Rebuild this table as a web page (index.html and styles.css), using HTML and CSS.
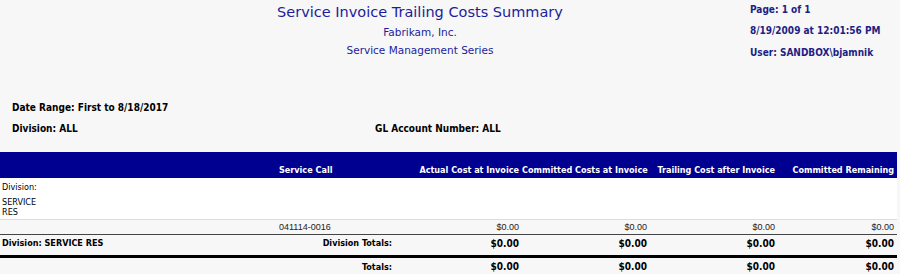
FILE: index.html
```html
<!DOCTYPE html>
<html lang="en">
  <head>
    <meta charset="UTF-8" />
    <title>Service Invoice Trailing Costs Summary</title>
    <link rel="stylesheet" href="styles.css">
  </head>
  <body>
    <div class="report-head">
      <div class="titles">
        <h1>Service Invoice Trailing Costs Summary</h1>
        <div class="sub">Fabrikam, Inc.</div>
        <div class="sub">Service Management Series</div>
      </div>
      <div class="info">
        <div>Page: 1 of 1</div>
        <div>8/19/2009 at 12:01:56 PM</div>
        <div>User: SANDBOX\bjamnik</div>
      </div>
    </div>

    <div class="filters">
      <div class="filter-row">Date Range: First to 8/18/2017</div>
      <div class="filter-row split">
        <span class="f-left">Division: ALL</span>
        <span>GL Account Number: ALL</span>
      </div>
    </div>

    <table class="report">
      <colgroup>
        <col style="width:275px">
        <col style="width:120px">
        <col style="width:127px">
        <col style="width:128px">
        <col style="width:128px">
        <col style="width:119px">
      </colgroup>
      <thead>
        <tr>
          <th></th>
          <th class="l">Service Call</th>
          <th>Actual Cost at Invoice</th>
          <th>Committed Costs at Invoice</th>
          <th>Trailing Cost after Invoice</th>
          <th>Committed Remaining</th>
        </tr>
      </thead>
      <tbody>
        <tr class="group">
          <td colspan="6">
            <div class="g-label">Division:</div>
            <div class="g-name">SERVICE<br>RES</div>
          </td>
        </tr>
        <tr class="detail">
          <td></td>
          <td class="l">041114-0016</td>
          <td>$0.00</td>
          <td>$0.00</td>
          <td>$0.00</td>
          <td>$0.00</td>
        </tr>
        <tr class="subtotal">
          <td class="l">Division: SERVICE RES</td>
          <td>Division Totals:</td>
          <td class="amt">$0.00</td>
          <td class="amt">$0.00</td>
          <td class="amt">$0.00</td>
          <td class="amt">$0.00</td>
        </tr>
        <tr class="total">
          <td></td>
          <td>Totals:</td>
          <td class="amt">$0.00</td>
          <td class="amt">$0.00</td>
          <td class="amt">$0.00</td>
          <td class="amt">$0.00</td>
        </tr>
      </tbody>
    </table>
  </body>
</html>
```

FILE: styles.css
```css
body {
  margin: 0;
  background: #f7f7f7;
  font-family: "DejaVu Sans Condensed", "DejaVu Sans", Verdana, sans-serif;
  font-stretch: condensed;
  color: #000;
}
.report-head {
  display: flex;
  height: 97px;
}
.titles {
  width: 750px;
  padding-left: 90px;
  box-sizing: border-box;
  text-align: center;
  color: #1c1c9c;
  font-family: "DejaVu Sans", Verdana, sans-serif;
  font-stretch: normal;
}
.titles h1 {
  margin: 3px 0 0;
  font-size: 14.5px;
  font-weight: normal;
  line-height: 19px;
}
.sub {
  font-size: 10.5px;
  line-height: 18px;
}
.sub:first-of-type {
  margin-top: 1px;
}
.info {
  padding-top: 3px;
  font-size: 10px;
  font-weight: bold;
  color: #1e1e84;
}
.info div {
  line-height: 22px;
}
.info div:first-child {
  line-height: 14px;
  margin-bottom: 3px;
}
.filters {
  padding-left: 12px;
  font-size: 10px;
  font-weight: bold;
  height: 55px;
}
.filter-row {
  line-height: 21px;
}
.split {
  display: flex;
}
.f-left {
  width: 363px;
}
.report {
  border-collapse: collapse;
  table-layout: fixed;
  width: 897px;
  font-size: 9px;
}
.report th {
  background: #000090;
  color: #fff;
  font-size: 9px;
  font-weight: bold;
  text-align: right;
  height: 23px;
  padding: 0 3px 3px 0;
  vertical-align: bottom;
  white-space: nowrap;
}
.report td {
  text-align: right;
  padding: 0 3px 0 0;
  white-space: nowrap;
}
.report .l {
  text-align: left;
  padding-left: 4px;
}
.group td {
  background: #fff;
  text-align: left;
  padding: 3px 0 2px 2px;
  font-size: 9px;
  border-bottom: 1px solid #dcdcdc;
}
.g-label {
  line-height: 12px;
  margin-bottom: 4px;
}
.g-name {
  line-height: 10px;
}
.detail td {
  height: 14px;
  font-family: "Liberation Sans", Arial, sans-serif;
  font-stretch: normal;
  font-size: 9px;
  color: #222;
  border-bottom: 1px solid #444;
}
.subtotal td {
  height: 17px;
  vertical-align: top;
  padding-top: 3px;
  font-weight: bold;
  border-bottom: 3px solid #000;
}
.subtotal .l {
  padding-left: 2px;
}
.total td {
  height: 17px;
  font-weight: bold;
}
.report .amt {
  font-size: 10px;
}
```
